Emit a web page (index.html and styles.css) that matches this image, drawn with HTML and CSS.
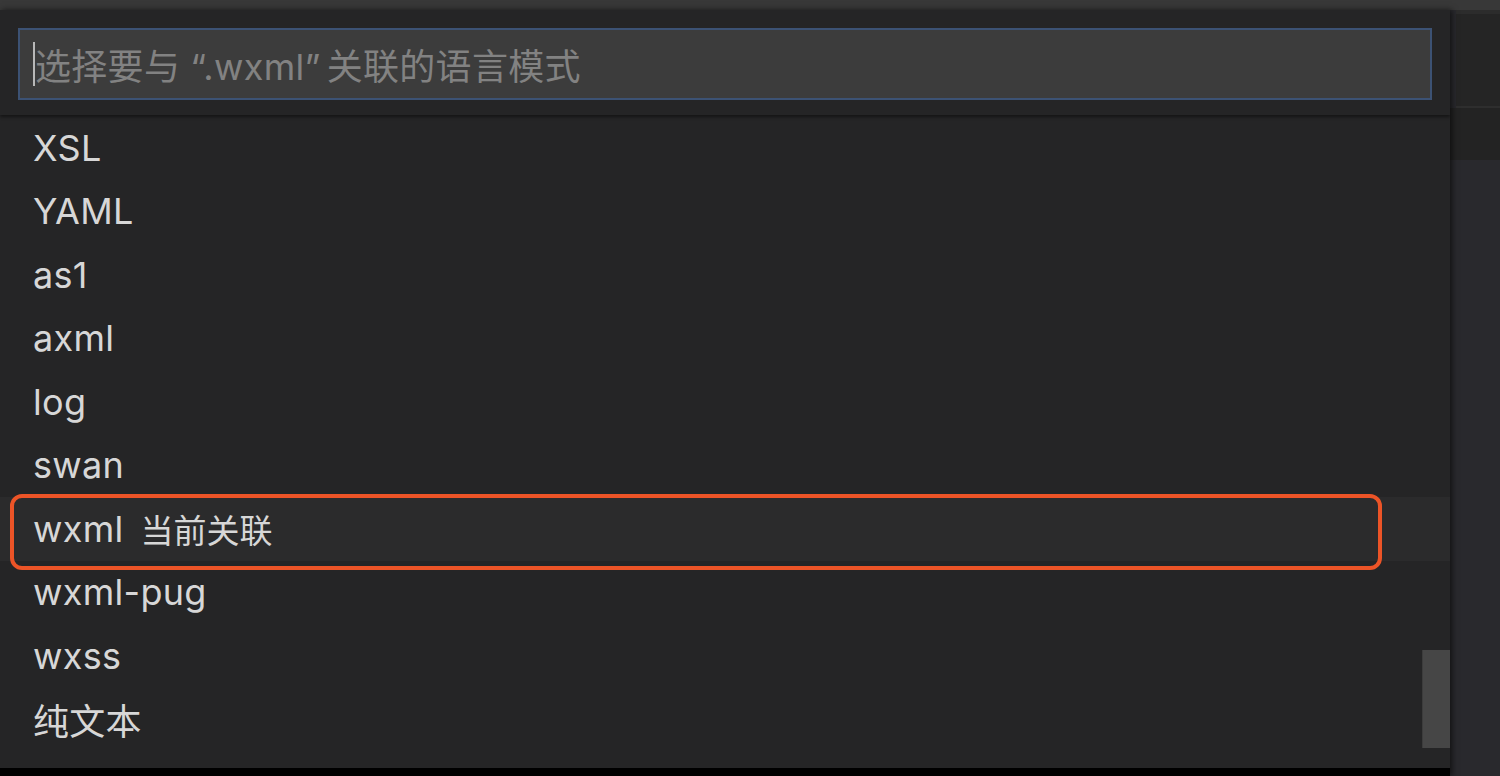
FILE: index.html
```html
<!DOCTYPE html>
<html lang="zh-CN">
<head>
<meta charset="utf-8">
<title>选择语言模式</title>
<link rel="stylesheet" href="styles.css">
</head>
<body>
<div class="titlebar"></div>
<div class="main">
  <div class="left">
    <div class="quickpick">
      <div class="header">
        <div class="input">
          <span class="caret"></span>
          <span class="placeholder">选择要与<span class="q-open">“</span>.wxml<span class="q-close">”</span>关联的语言模式</span>
        </div>
      </div>
      <div class="list">
        <div class="row"><span class="label">XSL</span></div>
        <div class="row"><span class="label">YAML</span></div>
        <div class="row"><span class="label">as1</span></div>
        <div class="row"><span class="label">axml</span></div>
        <div class="row"><span class="label">log</span></div>
        <div class="row"><span class="label">swan</span></div>
        <div class="row focused"><span class="label">wxml</span><span class="desc">当前关联</span></div>
        <div class="row"><span class="label">wxml-pug</span></div>
        <div class="row"><span class="label">wxss</span></div>
        <div class="row"><span class="label">纯文本</span></div>
      </div>
      <div class="scrollbar"></div>
      <div class="annotation"></div>
    </div>
  </div>
  <div class="editor">
    <div class="tabs"></div>
    <div class="crumbs"></div>
    <div class="content"></div>
  </div>
</div>
</body>
</html>
```

FILE: styles.css
```css
html, body {
  margin: 0;
  padding: 0;
  width: 1500px;
  height: 776px;
  overflow: hidden;
  background: #29292d;
  font-family: Inter, "Noto Sans CJK SC", sans-serif;
}

.titlebar {
  height: 10px;
  background: #383838;
}

.main {
  display: flex;
  height: 766px;
}

.left {
  width: 1450px;
  background: #000;
  position: relative;
  z-index: 2;
  box-shadow: 2px 0 6px rgba(0, 0, 0, 0.6);
}

.quickpick {
  position: relative;
  height: 758px;
  background: #252526;
  overflow: hidden;
}

.header {
  height: 105px;
  box-sizing: border-box;
  padding: 18px 18px 0 18px;
  background: #252526;
  box-shadow: 0 2px 3px rgba(0, 0, 0, 0.45);
  position: relative;
  z-index: 1;
}

.input {
  height: 72px;
  box-sizing: border-box;
  border: 2px solid #3c5274;
  background: #3c3c3c;
  display: flex;
  align-items: center;
  padding-left: 13px;
}

.caret {
  width: 2px;
  height: 44px;
  background: #b8b8b8;
  flex: none;
}

.placeholder {
  color: #828282;
  font-size: 36px;
  letter-spacing: 0.3px;
  white-space: nowrap;
}

.q-open {
  padding-left: 10px;
}

.q-close {
  padding-right: 6px;
}

.list {
  padding-top: 1px;
}

.row {
  height: 63.5px;
  display: flex;
  align-items: center;
  padding-left: 33px;
  color: #d7d7d7;
  font-size: 36px;
  letter-spacing: 0.3px;
  white-space: nowrap;
}

.row.focused {
  background: #2b2b2c;
}

.desc {
  margin-left: 17px;
  font-size: 33px;
  letter-spacing: 0;
  color: #d7d7d7;
}

.scrollbar {
  position: absolute;
  left: 1422px;
  top: 640px;
  width: 28px;
  height: 98px;
  background: #464646;
  box-shadow: inset 1px 0 0 #3c3c3c;
}

.annotation {
  position: absolute;
  left: 10px;
  top: 484px;
  width: 1372px;
  height: 76px;
  box-sizing: border-box;
  border: 4px solid #ec5427;
  border-radius: 12px;
}

.editor {
  flex: 1;
  display: flex;
  flex-direction: column;
}

.tabs {
  height: 98px;
  background: #252525;
  box-sizing: border-box;
  border-top: 4px solid #2c2c2c;
  border-bottom: 2px solid #2e2e2e;
  margin-left: 6px;
}

.crumbs {
  height: 52px;
  background: #232323;
}

.content {
  flex: 1;
  background: #29292d;
}
```
